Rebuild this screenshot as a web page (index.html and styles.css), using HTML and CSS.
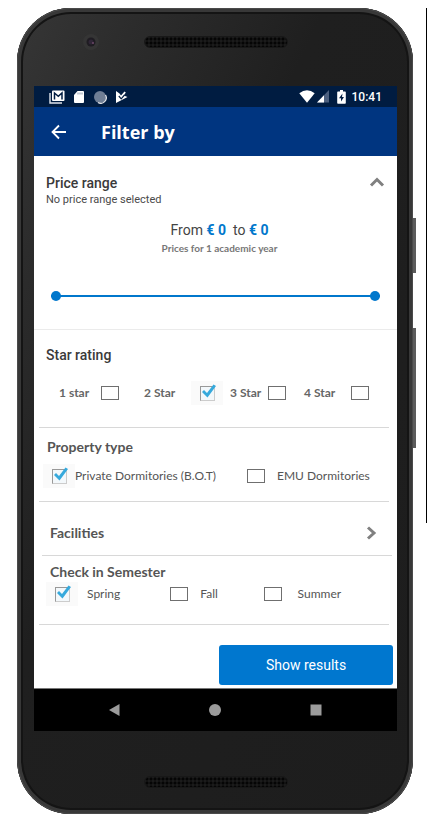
FILE: index.html
```html
<!DOCTYPE html>
<html lang="en">
<head>
<meta charset="utf-8">
<meta name="viewport" content="width=device-width, initial-scale=1">
<title>Filter by</title>
<link rel="stylesheet" href="styles.css">
</head>
<body>
<div class="phone">
  <span class="side-key power"></span>
  <span class="side-key volume"></span>
  <div class="bezel bezel-top">
    <svg class="camera" viewBox="0 0 16 16" aria-hidden="true"><circle cx="8" cy="8" r="8" fill="#353535"/><circle cx="8" cy="8" r="4.5" fill="#1f1c22"/><circle cx="8" cy="8" r="2.5" fill="#302637"/><circle cx="10" cy="9" r="1" fill="#6d4968"/></svg>
    <span class="speaker"></span>
  </div>
  <div class="screen">
    <div class="status">
      <svg width="16" height="14" viewBox="0 0 16 14" aria-hidden="true"><path d="M1 3v10h12" fill="none" stroke="#dfe4ec" stroke-width="1.4"/><rect x="3" y="0.5" width="12.5" height="10.5" rx="1" fill="#fff"/><path d="M5.5 9.500V3l3.800 3.200L13 3v6.500" fill="none" stroke="#001c41" stroke-width="1.500"/></svg>
      <svg width="12" height="14" viewBox="0 0 12 14" aria-hidden="true"><path d="M4.500 1H10q1 0 1 1v10q0 1-1 1H2q-1 0-1-1V5z" fill="#fff"/><path d="M5 2.500v2M7 2.500v2M9 2.500v2" stroke="#8b98ab"/></svg>
      <svg width="14" height="14" viewBox="0 0 14 14" aria-hidden="true"><circle cx="7" cy="7" r="6" fill="#6f7e95"/><path d="M12.500 5A5.500 5.500 0 0 1 5 12.500" fill="none" stroke="#e1e4e9" stroke-width="1.300"/></svg>
      <svg width="13" height="14" viewBox="0 0 13 14" aria-hidden="true"><path d="M1 1l3.500 2.500L6 5.500 9.500 1.500 10.800 2.500 8.800 5.500 12.500 7 1 13z" fill="#fff"/><path d="M3.800 6l2.400 2.800L9.500 5" fill="none" stroke="#001c41" stroke-width="1.200"/></svg>
      <span class="spacer"></span>
      <svg width="16" height="13" viewBox="0 0 16 13" aria-hidden="true"><path d="M0.300 3.200Q8-2.600 15.700 3.200L8 12.700z" fill="#fff"/></svg>
      <svg class="signal" width="12" height="13" viewBox="0 0 12 13" aria-hidden="true"><path d="M12 0v12.500H0z" fill="#4c6080"/><path d="M7 5.200v7.300H0z" fill="#fff"/></svg>
      <svg width="9" height="14" viewBox="0 0 9 14" aria-hidden="true"><path d="M3 0h3v1.500h2q.8 0 .8.800v10.700q0 .8-.8.800H1q-.8 0-.8-.8V2.300q0-.8.800-.8h2z" fill="#fff"/><path d="M5.500 3.500L2 8.200h2v3.300l3-4.500H5z" fill="#001c41"/></svg>
      <time>10:41</time>
    </div>
    <header class="appbar">
      <button class="icon-button" type="button" aria-label="Back"><svg width="16" height="16" viewBox="0 0 16 16" aria-hidden="true"><path d="M15 8H2M8 1.500L1.500 8 8 14.500" fill="none" stroke="#fff" stroke-width="1.800"/></svg></button>
      <h1>Filter by</h1>
    </header>
    <form class="filters">
      <section class="price">
        <div class="price-head">
          <div>
            <h2>Price range</h2>
            <p class="note">No price range selected</p>
          </div>
          <button class="icon-button" type="button" aria-label="Collapse price range"><svg width="16" height="16" viewBox="0 0 16 16" aria-hidden="true"><path d="M2 11.500l6-6 6 6" fill="none" stroke="#808080" stroke-width="3"/></svg></button>
        </div>
        <div class="summary">
          <p class="amount">From <b>€ 0</b>&nbsp; to <b>€ 0</b></p>
          <p class="period">Prices for 1 academic year</p>
        </div>
        <div class="slider">
          <input type="range" min="0" max="100" value="0" aria-label="Lowest price">
          <input class="high" type="range" min="0" max="100" value="100" aria-label="Highest price">
        </div>
      </section>
      <fieldset class="stars">
        <legend>Star rating</legend>
        <div class="star-options">
          <label class="near"><span>1 star</span><span class="tick"><input type="checkbox"></span></label>
          <label class="far"><span>2 Star</span><span class="tick on"><input type="checkbox" checked><svg viewBox="0 0 16 16" aria-hidden="true"><path d="M1.500 8l2-2 3 3 6.500-8.500 2.500 1.500L7 13.500z" fill="#36a9dc"/></svg></span></label>
          <label><span>3 Star</span><span class="tick"><input type="checkbox"></span></label>
          <label class="mid"><span>4 Star</span><span class="tick"><input type="checkbox"></span></label>
        </div>
      </fieldset>
      <fieldset class="property">
        <legend>Property type</legend>
        <div class="property-options">
          <label><span class="tick on"><input type="checkbox" checked><svg viewBox="0 0 16 16" aria-hidden="true"><path d="M1.500 8l2-2 3 3 6.500-8.500 2.500 1.500L7 13.500z" fill="#36a9dc"/></svg></span><span>Private Dormitories (B.O.T)</span></label>
          <label class="near"><span class="tick"><input type="checkbox"></span><span>EMU Dormitories</span></label>
        </div>
      </fieldset>
      <button class="facilities" type="button"><span>Facilities</span><svg width="12" height="16" viewBox="0 0 12 16" aria-hidden="true"><path d="M2 2.500L8 8l-6 5.500" fill="none" stroke="#808080" stroke-width="3"/></svg></button>
      <fieldset class="semester">
        <legend>Check in Semester</legend>
        <div class="semester-options">
          <label class="mid"><span class="tick on"><input type="checkbox" checked><svg viewBox="0 0 16 16" aria-hidden="true"><path d="M1.500 8l2-2 3 3 6.500-8.500 2.500 1.500L7 13.500z" fill="#36a9dc"/></svg></span><span>Spring</span></label>
          <label class="near"><span class="tick"><input type="checkbox"></span><span>Fall</span></label>
          <label class="mid"><span class="tick"><input type="checkbox"></span><span>Summer</span></label>
        </div>
      </fieldset>
      <div class="actions"><button class="submit" type="submit">Show results</button></div>
    </form>
    <nav class="navbar" aria-label="System">
      <button class="icon-button" type="button" aria-label="Back"><svg width="12" height="14" viewBox="0 0 12 14" aria-hidden="true"><path d="M11.500 1v12L1 7z" fill="#9b9b9b"/></svg></button>
      <button class="icon-button" type="button" aria-label="Home"><svg width="12" height="12" viewBox="0 0 12 12" aria-hidden="true"><circle cx="6" cy="6" r="6" fill="#9b9b9b"/></svg></button>
      <button class="icon-button" type="button" aria-label="Recent apps"><svg width="12" height="12" viewBox="0 0 12 12" aria-hidden="true"><rect x=".5" y=".5" width="11" height="11" fill="#9b9b9b"/></svg></button>
    </nav>
  </div>
  <div class="bezel bezel-bottom"><span class="speaker"></span></div>
</div>
<span class="edge"></span>
</body>
</html>
```
FILE: styles.css
```css
* { box-sizing: border-box; }
body {
  margin: 0;
  padding: 8px 14px 20px 17px;
  background: #fff;
  color: #555;
  font: 12px/16px Lato, "Liberation Sans", sans-serif;
  position: relative;
}
h1, h2, p, fieldset { margin: 0; }
fieldset { border: 0; padding: 0; min-width: 0; }
legend { padding: 0; }
button { font: inherit; color: inherit; border: 0; background: none; padding: 0; margin: 0; cursor: pointer; }
svg { display: block; flex: none; }

.edge {
  position: absolute;
  right: 0;
  top: 8px;
  width: 1px;
  height: 515px;
  background: #000;
}

/* Handset */
.phone {
  position: relative;
  padding: 0 16px 0 17px;
  border-radius: 54px;
  background: linear-gradient(115deg, #363636 0%, #2c2c2c 16%, #1f1f1f 40%, #1d1d1d 100%);
  box-shadow: inset 0 0 0 1px #4a4a4a, inset 0 0 0 4px #383838, inset 0 0 0 6px #141414;
}
.side-key { position: absolute; width: 3px; right: -3px; background: #5c5c5c; }
.power { top: 210px; height: 55px; }
.volume { top: 320px; height: 120px; }
.bezel { display: flex; justify-content: center; position: relative; }
.bezel-top { height: 78px; padding-top: 28px; }
.bezel-bottom { height: 83px; padding-top: 45px; }
.camera { position: absolute; left: 49px; top: 26px; width: 16px; height: 16px; }
.speaker {
  width: 144px;
  height: 12px;
  border-radius: 6px;
  background: radial-gradient(circle, #050505 1px, #1b1b1b 2px) 0 0 / 4px 4px;
  border: 1px solid #181818;
}

.screen { background: #fff; }
.status {
  display: flex;
  align-items: center;
  height: 21px;
  padding: 0 15px;
  gap: 8px;
  background: #001c41;
  color: #fff;
  font: 500 12px/20px Roboto, sans-serif;
}
.status time { margin-left: -2px; }
.spacer { flex: 1; }
.signal { margin-left: -6px; }
.appbar {
  display: flex;
  align-items: center;
  gap: 34px;
  height: 49px;
  padding: 0 17px;
  background: #003580;
  color: #fff;
}
h1 { font: 700 18px/24px "Open Sans", Lato, sans-serif; }

/* Price */
.price { height: 174px; padding: 17px 12px 0; border-bottom: 1px solid #ebebeb; }
.price-head { display: flex; justify-content: space-between; align-items: flex-start; }
h2, .stars legend { color: #3a3a3a; font: 500 14px/20px Roboto, sans-serif; }
.note { color: #4a4a4a; font: 11px/14px Roboto, sans-serif; }
.summary { padding: 13px 0 0 8px; text-align: center; }
.amount { color: #444; font: 14px/20px Roboto, sans-serif; }
.amount b { color: #0077cc; font-weight: 700; }
.period { color: #777; font-size: 10px; font-weight: 700; }
.price-head .icon-button { padding-top: 1px; }
.slider { position: relative; height: 12px; margin: 34px 5px 0; }
.slider input {
  appearance: none;
  position: absolute;
  left: 0;
  top: 0;
  width: 100%;
  height: 12px;
  margin: 0;
  background: none;
}
.slider input::-webkit-slider-runnable-track { height: 2px; background: #0077cc; }
.slider .high { pointer-events: none; }
.slider input::-webkit-slider-thumb {
  appearance: none;
  width: 10px;
  height: 10px;
  margin-top: -4px;
  border-radius: 50%;
  background: #0077cc;
  pointer-events: auto;
}

/* Choices */
.stars, .property, .semester { margin: 0 8px 0 5px; border-bottom: 1px solid #d8d8d8; }
.property legend, .semester legend, .facilities { font-size: 14px; font-weight: 700; line-height: 20px; }
label { display: flex; align-items: center; white-space: nowrap; }
.near { gap: 5px; }
.mid { gap: 9px; }
.far { gap: 16px; }
.tick { position: relative; display: grid; place-items: center; width: 32px; height: 24px; }
.tick input { appearance: none; width: 18px; height: 14px; margin: 0; border: 1px solid #6f6f6f; background: #fff; }
.on { background: #fafafa; }
.on input { width: 15px; height: 15px; border-color: #999 #ccc #ccc #999; background: #f3f8fb; }
.on svg { position: absolute; left: 9px; top: 3px; width: 17px; height: 16px; }

.stars { height: 98px; padding-top: 15px; }
.stars legend { float: left; width: 100%; padding-left: 7px; }
.star-options {
  clear: both;
  display: grid;
  grid-template-columns: 85fr 86fr 74fr 85fr;
  padding: 16px 0 0 20px;
  color: #666;
  font-weight: 700;
}
.property { height: 74px; padding-top: 9px; }
.property legend { float: left; width: 100%; padding-left: 8px; }
.property-options {
  clear: both;
  display: grid;
  grid-template-columns: 197fr 149fr;
  padding: 7px 0 0 4px;
}
.facilities {
  display: flex;
  justify-content: space-between;
  align-items: center;
  width: calc(100% - 13px);
  height: 54px;
  margin: 0 5px 0 8px;
  padding: 8px 14px 0 8px;
  border-bottom: 1px solid #d8d8d8;
}
.semester { height: 69px; padding-top: 6px; }
.semester legend { float: left; width: 100%; padding-left: 11px; }
.semester-options {
  clear: both;
  display: grid;
  grid-template-columns: 117fr 93fr 132fr;
  padding-left: 7px;
}
.actions { display: flex; justify-content: flex-end; padding: 20px 4px 3px; }
.submit {
  width: 49%;
  height: 40px;
  border-radius: 3px;
  background: #0077cf;
  color: #fff;
  font: 14px/20px Roboto, sans-serif;
}
.navbar {
  display: flex;
  justify-content: center;
  align-items: center;
  gap: 89px;
  height: 43px;
  padding-right: 2px;
  border-top: 1px solid #777;
  background: #000;
}
```
